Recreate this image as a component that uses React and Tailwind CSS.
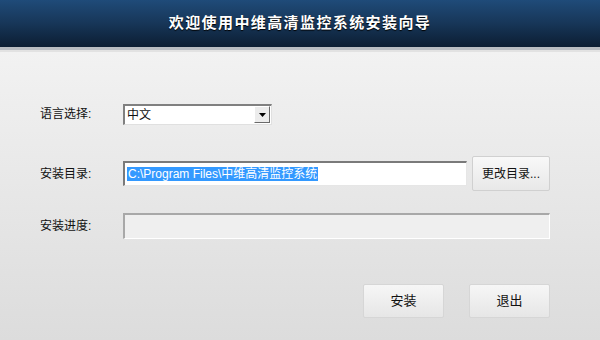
export default function App() {
  const font = { fontFamily: '"Liberation Sans", "Noto Sans CJK SC", sans-serif' };
  return (
    <div className="w-[600px] h-[340px] overflow-hidden flex flex-col bg-gradient-to-b from-[#f6f6f6] to-[#dcdcdc] text-[#111]" style={font}>
      <div className="h-[50px] shrink-0 flex items-center justify-center bg-gradient-to-b from-[#1f4b79] via-[#173658] to-[#0c1e33] border-b-[3px] border-[#b9bdc2]">
        <span className="text-white font-bold text-[15px] tracking-[1.4px] [text-shadow:0_1px_1px_#000]">欢迎使用中维高清监控系统安装向导</span>
      </div>
      <div className="h-[2px] bg-[#e2e2e2]"></div>
      <div className="flex flex-col pl-[40px] pr-[50px] pt-[51px]">
        <div className="flex items-center h-[22px]">
          <span className="w-[83px] text-[12px]">语言选择:</span>
          <div className="w-[149px] h-[21px] flex items-center bg-white border-t-2 border-l-2 border-t-[#808080] border-l-[#808080] border-b border-r border-b-[#e0e0e0] border-r-[#e0e0e0]">
            <span className="flex-1 text-[12px] pl-[2px]">中文</span>
            <div className="w-[16px] h-[17px] mr-[1px] flex items-center justify-center bg-[#ececec] border-r border-b border-[#6a6a6a] border-t border-l border-t-white border-l-white">
              <svg width="7" height="4" viewBox="0 0 7 4"><path d="M0 0h7L3.5 4z" fill="#000" /></svg>
            </div>
          </div>
        </div>
        <div className="flex items-center h-[35px] mt-[31px]">
          <span className="w-[83px] text-[12px]">安装目录:</span>
          <div className="w-[344px] h-[25px] flex items-center bg-white border-t-2 border-l-2 border-t-[#7a7a7a] border-l-[#7a7a7a] border-b border-r border-b-[#e6e6e6] border-r-[#e6e6e6]">
            <span className="ml-[2px] px-[1px] bg-[#3399ff] text-white text-[12px] leading-[14px]">C:\Program Files\中维高清监控系统</span>
          </div>
          <div className="ml-[5px] w-[78px] h-[35px] flex items-center justify-center text-[12px] bg-gradient-to-b from-[#f8f8f8] to-[#e8e8e8] border border-[#d0d0d0] rounded-[2px]">更改目录...</div>
        </div>
        <div className="flex items-center h-[26px] mt-[22px]">
          <span className="w-[83px] text-[12px]">安装进度:</span>
          <div className="w-[427px] h-[26px] bg-[#efefef] border-t-2 border-l-2 border-t-[#a8a8a8] border-l-[#a8a8a8] border-b border-r border-b-white border-r-white"></div>
        </div>
        <div className="flex justify-end gap-[25px] mt-[45px]">
          <div className="w-[81px] h-[34px] flex items-center justify-center text-[13px] bg-gradient-to-b from-[#f6f6f6] to-[#e6e6e6] border border-[#d6d6d6] rounded-[2px]">安装</div>
          <div className="w-[81px] h-[34px] flex items-center justify-center text-[13px] bg-gradient-to-b from-[#f6f6f6] to-[#e6e6e6] border border-[#d6d6d6] rounded-[2px]">退出</div>
        </div>
      </div>
    </div>
  );
}
